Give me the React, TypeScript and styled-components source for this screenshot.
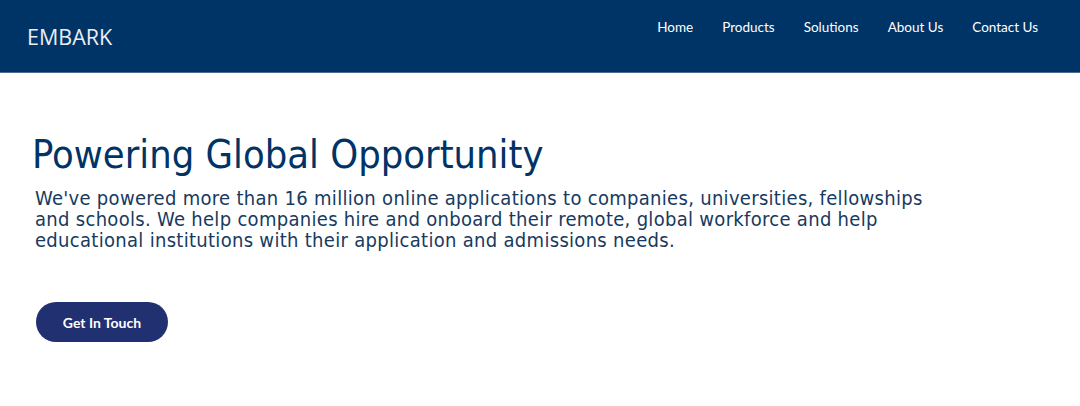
import styled, { createGlobalStyle } from "styled-components";

const links = ["Home", "Products", "Solutions", "About Us", "Contact Us"];

const GlobalStyle = createGlobalStyle`
  body {
    margin: 0;
    background: #ffffff;
  }
`;

const App = () => (
  <>
    <GlobalStyle />
    <Header>
      <Logo>EMBARK</Logo>
      <Nav>
        {links.map((link) => (
          <NavLink key={link}>{link}</NavLink>
        ))}
      </Nav>
    </Header>
    <Hero>
      <Title>Powering Global Opportunity</Title>
      <Text>
        We've powered more than 16 million online applications to companies, universities, fellowships
        and schools. We help companies hire and onboard their remote, global workforce and help
        educational institutions with their application and admissions needs.
      </Text>
      <Button>Get In Touch</Button>
    </Hero>
  </>
);

export default App;

const Header = styled.header`
  display: flex;
  justify-content: space-between;
  align-items: flex-start;
  height: 72px;
  background: #003366;
  border-bottom: 1px solid #4a6d94;
  padding: 0 42px 0 27px;
`;

const Logo = styled.div`
  font-family: "Open Sans", sans-serif;
  font-size: 21.5px;
  color: #e8eef5;
  margin-top: 22px;
`;

const Nav = styled.nav`
  display: flex;
  gap: 29px;
  margin-top: 19px;
`;

const NavLink = styled.a`
  font-family: Lato, sans-serif;
  font-size: 13.5px;
  color: #ffffff;
  cursor: pointer;
`;

const Hero = styled.section`
  padding: 58px 0 0 32px;
`;

const Title = styled.h1`
  margin: 0;
  font-family: "DejaVu Sans Condensed", "DejaVu Sans", sans-serif;
  font-weight: normal;
  font-size: 39.5px;
  color: #003366;
`;

const Text = styled.p`
  margin: 11px 0 0 3px;
  max-width: 910px;
  font-family: "DejaVu Sans Condensed", "DejaVu Sans", sans-serif;
  font-size: 20px;
  line-height: 21px;
  letter-spacing: 0.3px;
  color: #173a60;
`;

const Button = styled.button`
  margin: 51px 0 0 4px;
  width: 132px;
  height: 40px;
  border: none;
  border-radius: 20px;
  background: #213070;
  color: #ffffff;
  font-family: Lato, sans-serif;
  font-weight: bold;
  font-size: 14px;
  cursor: pointer;
`;
